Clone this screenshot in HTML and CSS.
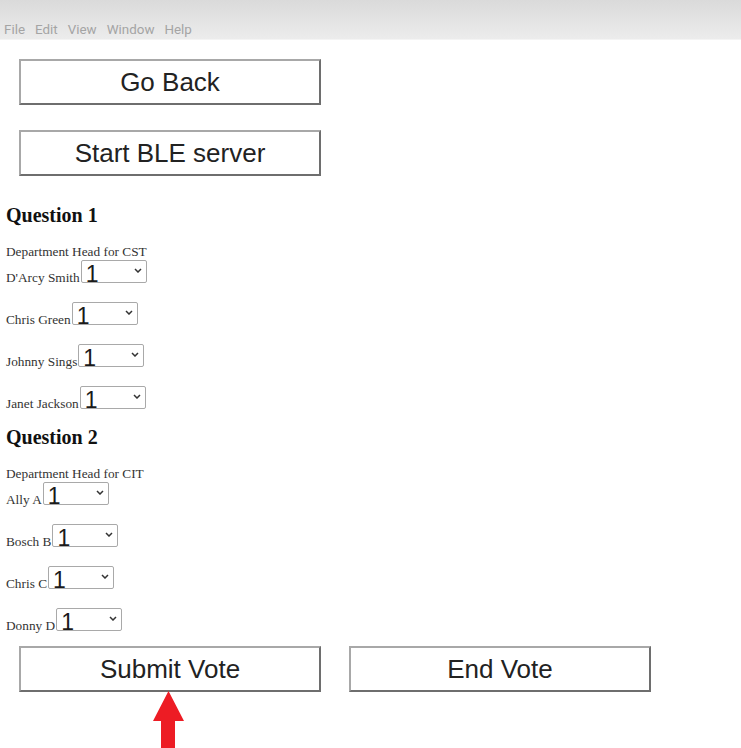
FILE: index.html
```html
<!DOCTYPE html>
<html>
<head>
<meta charset="utf-8">
<title>Vote</title>
<link rel="stylesheet" href="styles.css">
</head>
<body>
<div class="menubar">
  <span class="menu-item">File</span>
  <span class="menu-item">Edit</span>
  <span class="menu-item">View</span>
  <span class="menu-item">Window</span>
  <span class="menu-item">Help</span>
</div>
<main class="page">
  <div class="top-actions">
    <button class="btn">Go Back</button>
    <button class="btn">Start BLE server</button>
  </div>

  <section class="question">
    <h3 class="q-title">Question 1</h3>
    <p class="q-desc">Department Head for CST</p>
    <div class="rows">
      <div class="row"><span class="name">D'Arcy Smith</span><span class="select"><span class="val">1</span><svg class="chev" width="8" height="5" viewBox="0 0 8 5"><path d="M1 1 L4 4 L7 1" fill="none" stroke="#333" stroke-width="1.5"/></svg></span></div>
      <div class="row"><span class="name">Chris Green</span><span class="select"><span class="val">1</span><svg class="chev" width="8" height="5" viewBox="0 0 8 5"><path d="M1 1 L4 4 L7 1" fill="none" stroke="#333" stroke-width="1.5"/></svg></span></div>
      <div class="row"><span class="name">Johnny Sings</span><span class="select"><span class="val">1</span><svg class="chev" width="8" height="5" viewBox="0 0 8 5"><path d="M1 1 L4 4 L7 1" fill="none" stroke="#333" stroke-width="1.5"/></svg></span></div>
      <div class="row"><span class="name">Janet Jackson</span><span class="select"><span class="val">1</span><svg class="chev" width="8" height="5" viewBox="0 0 8 5"><path d="M1 1 L4 4 L7 1" fill="none" stroke="#333" stroke-width="1.5"/></svg></span></div>
    </div>
  </section>

  <section class="question q-second">
    <h3 class="q-title">Question 2</h3>
    <p class="q-desc">Department Head for CIT</p>
    <div class="rows">
      <div class="row"><span class="name">Ally A</span><span class="select"><span class="val">1</span><svg class="chev" width="8" height="5" viewBox="0 0 8 5"><path d="M1 1 L4 4 L7 1" fill="none" stroke="#333" stroke-width="1.5"/></svg></span></div>
      <div class="row"><span class="name">Bosch B</span><span class="select"><span class="val">1</span><svg class="chev" width="8" height="5" viewBox="0 0 8 5"><path d="M1 1 L4 4 L7 1" fill="none" stroke="#333" stroke-width="1.5"/></svg></span></div>
      <div class="row"><span class="name">Chris C</span><span class="select"><span class="val">1</span><svg class="chev" width="8" height="5" viewBox="0 0 8 5"><path d="M1 1 L4 4 L7 1" fill="none" stroke="#333" stroke-width="1.5"/></svg></span></div>
      <div class="row"><span class="name">Donny D</span><span class="select"><span class="val">1</span><svg class="chev" width="8" height="5" viewBox="0 0 8 5"><path d="M1 1 L4 4 L7 1" fill="none" stroke="#333" stroke-width="1.5"/></svg></span></div>
    </div>
  </section>

  <div class="bottom-actions">
    <button class="btn">Submit Vote</button>
    <button class="btn">End Vote</button>
  </div>
</main>
<svg class="annotation-arrow" width="31" height="57" viewBox="0 0 31 57">
  <path d="M15.5 0 L31 30 L22 30 L22 57 L8 57 L8 30 L0 30 Z" fill="#ed1c24"/>
</svg>
</body>
</html>
```

FILE: styles.css
```css
html, body {
  margin: 0;
  padding: 0;
  background: #ffffff;
}

body {
  font-family: "Liberation Serif", serif;
  color: #222;
  position: relative;
  height: 748px;
  overflow: hidden;
}

.menubar {
  height: 40px;
  box-sizing: border-box;
  padding: 23px 0 0 4px;
  display: flex;
  gap: 10px;
  background: linear-gradient(#dadada, #ececec);
  border-bottom: 1px solid #f4f4f4;
  font-family: Roboto, "Liberation Sans", sans-serif;
  font-size: 13.4px;
  line-height: 14px;
  color: #a4a4a4;
}

.page {
  padding-left: 6px;
}

.top-actions {
  display: flex;
  flex-direction: column;
  gap: 25px;
  padding: 19px 0 0 13px;
}

.btn {
  display: block;
  width: 302px;
  height: 46px;
  box-sizing: border-box;
  margin: 0;
  padding: 0;
  background: #ffffff;
  border: 2px solid;
  border-color: #a8a8a8 #6e6e6e #6e6e6e #a8a8a8;
  font-family: "Liberation Sans", Arial, sans-serif;
  font-size: 26px;
  color: #222;
  text-align: center;
  line-height: 40px;
}

.q-title {
  margin: 29px 0 0;
  font-size: 20px;
  line-height: 20px;
  font-weight: bold;
  color: #111;
}

.q-second .q-title {
  margin-top: 18px;
}

.q-desc {
  margin: 20px 0 0;
  font-size: 13.3px;
  line-height: 13px;
  color: #333;
}

.rows {
  display: flex;
  flex-direction: column;
  gap: 19px;
  margin-top: 2px;
}

.row {
  display: flex;
  align-items: baseline;
  column-gap: 1px;
  font-size: 13.3px;
}

.name {
  line-height: 10px;
  color: #333;
}

.select {
  display: flex;
  align-items: flex-start;
  width: 66px;
  height: 23px;
  box-sizing: border-box;
  border: 1px solid #a9a9a9;
  border-radius: 2px;
  padding-left: 4px;
  background: #fff;
  font-family: "Liberation Sans", Arial, sans-serif;
  font-size: 23px;
  color: #1a1a1a;
}

.val {
  padding-top: 3px;
  line-height: 20px;
}

.chev {
  margin-left: auto;
  margin-right: 4px;
  margin-top: 7px;
  flex: none;
}

.bottom-actions {
  display: flex;
  gap: 28px;
  padding: 15px 0 0 13px;
}

.annotation-arrow {
  position: absolute;
  left: 153px;
  top: 691px;
}
```
